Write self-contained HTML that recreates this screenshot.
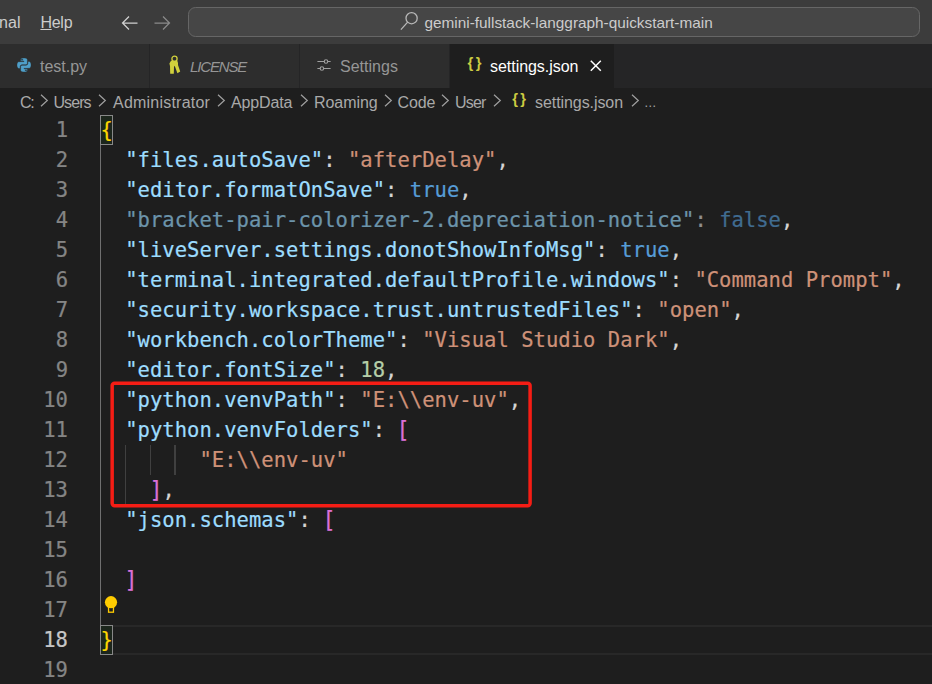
<!DOCTYPE html>
<html><head><meta charset="utf-8">
<style>
html,body{margin:0;padding:0;}
body{width:932px;height:684px;overflow:hidden;background:#1e1e1e;position:relative;font-family:"Liberation Sans","DejaVu Sans",sans-serif;color:#ccc;}
.abs{position:absolute;}
#title{left:0;top:0;width:932px;height:44px;background:#3c3c3c;}
#title .t{position:absolute;top:0;height:44px;line-height:45px;font-size:16px;color:#cccccc;white-space:pre;}
#cc{position:absolute;left:188px;top:7px;width:732px;height:30px;border:1px solid #666666;border-radius:7.5px;background:#464646;box-sizing:border-box;}
#tabs{left:0;top:44px;width:932px;height:44px;background:#252526;}
.tab{position:absolute;top:0;height:44px;background:#2d2d2d;border-right:1px solid #252526;box-sizing:border-box;}
.tab .l{position:absolute;top:0;height:44px;line-height:45px;font-size:16px;color:#969696;white-space:pre;}
.tab.act{background:#1e1e1e;}
.tab.act .l{color:#ffffff;}
#bc{left:0;top:88px;width:932px;height:27px;background:#1e1e1e;}
#bc .b{position:absolute;top:1px;height:27px;line-height:28px;font-size:16px;color:#a9a9a9;white-space:pre;}
#ed{left:0;top:115px;width:932px;height:570px;font-family:"DejaVu Sans Mono","Liberation Mono",monospace;font-size:20.5px;letter-spacing:.03px;-webkit-text-stroke:.22px;}
.ln{position:absolute;left:0;width:68px;text-align:right;height:30px;line-height:30px;color:#858585;white-space:pre;}
.cl{position:absolute;left:100.5px;height:30px;line-height:30px;white-space:pre;color:#d4d4d4;}
.k{color:#9cdcfe}.s{color:#ce9178}.b{color:#569cd6}.n{color:#b5cea8}.p{color:#d4d4d4}.y{color:#ffd700}.m{color:#da70d6;display:inline-block;transform:scale(1.06,1.09);transform-origin:60% 6px}
.dim{opacity:.62}
.br{position:absolute;font-family:"Liberation Sans",sans-serif;font-weight:bold;font-size:14.800px;letter-spacing:2.300px;color:#cbcb41;white-space:pre;}
.g{position:absolute;width:1.25px;background:#404040;}
.ga{background:#707070;}
.ln.cur{color:#c6c6c6;}
.bmb{position:absolute;left:100px;width:13px;height:30px;box-sizing:border-box;border:1px solid #888888;background:#1c261c;}
.curline{position:absolute;left:101px;top:510px;width:831px;height:30px;box-sizing:border-box;border-top:2px solid #282828;border-bottom:2px solid #282828;}
</style></head><body>
<div id="title" class="abs">
 <span class="t" style="left:-40px">Terminal</span>
 <span class="t" style="left:40.4px;letter-spacing:-.25px"><u>H</u>elp</span>
 <svg class="abs" style="left:120px;top:12.5px" width="20" height="20" viewBox="0 0 20 20"><path d="M17.5 10H2.5M9 3.5L2.5 10L9 16.5" fill="none" stroke="#d0d0d0" stroke-width="1.250"/></svg>
 <svg class="abs" style="left:152px;top:12.5px" width="20" height="20" viewBox="0 0 20 20"><path d="M2.5 10H17.5M11 3.5L17.5 10L11 16.5" fill="none" stroke="#8a8a8a" stroke-width="1.250"/></svg>
 <div id="cc"></div>
 <svg class="abs" style="left:399px;top:11px" width="20" height="20" viewBox="0 0 20 20"><circle cx="12.600" cy="7.200" r="5.600" fill="none" stroke="#b8b8b8" stroke-width="1.300"/><path d="M8.640 11.160L1.900 18.600" stroke="#b8b8b8" stroke-width="1.300"/></svg>
 <span class="t" style="left:424.5px;font-size:15.35px">gemini-fullstack-langgraph-quickstart-main</span>
</div>
<div id="tabs" class="abs">
 <div class="tab" style="left:0;width:150px"><svg class="abs" style="left:17.4px;top:13.8px" width="14" height="14" viewBox="0 0 24 24"><path fill="#4f9fc9" stroke="#2d2d2d" stroke-width=".7" d="M14.25.18l.9.2.73.26.59.3.45.32.34.34.25.34.16.33.1.3.04.26.02.2-.01.13V8.5l-.05.63-.13.55-.21.46-.26.38-.3.31-.33.25-.35.19-.35.14-.33.1-.3.07-.26.04-.21.02H8.77l-.69.05-.59.14-.5.22-.41.27-.33.32-.27.35-.2.36-.15.37-.1.35-.07.32-.04.27-.02.21v3.06H3.17l-.21-.03-.28-.07-.32-.12-.35-.18-.36-.26-.36-.36-.35-.46-.32-.59-.28-.73-.21-.88-.14-1.05-.05-1.23.06-1.22.16-1.04.24-.87.32-.71.36-.57.4-.44.42-.33.42-.24.4-.16.36-.1.32-.05.24-.01h.16l.06.01h8.16v-.83H6.18l-.01-2.75-.02-.37.05-.34.11-.31.17-.28.25-.26.31-.23.38-.2.44-.18.51-.15.58-.12.64-.1.71-.06.77-.04.84-.02 1.27.05zm-6.3 1.98l-.23.33-.08.41.08.41.23.34.33.22.41.09.41-.09.33-.22.23-.34.08-.41-.08-.41-.23-.33-.33-.22-.41-.09-.41.09zm13.09 3.95l.28.06.32.12.35.18.36.27.36.35.35.47.32.59.28.73.21.88.14 1.04.05 1.23-.06 1.23-.16 1.04-.24.86-.32.71-.36.57-.4.45-.42.33-.42.24-.4.16-.36.09-.32.05-.24.02-.16-.01h-8.22v.82h5.84l.01 2.76.02.36-.05.34-.11.31-.17.29-.25.25-.31.24-.38.2-.44.17-.51.15-.58.13-.64.09-.71.07-.77.04-.84.01-1.27-.04-1.07-.14-.9-.2-.73-.25-.59-.3-.45-.33-.34-.34-.25-.34-.16-.33-.1-.3-.04-.25-.02-.2.01-.13v-5.34l.05-.64.13-.54.21-.46.26-.38.3-.32.33-.24.35-.2.35-.14.33-.1.3-.06.26-.04.21-.02.13-.01h5.84l.69-.05.59-.14.5-.21.41-.28.33-.32.27-.35.2-.36.15-.36.1-.35.07-.32.04-.28.02-.21V6.07h2.09l.14.01zm-6.47 14.25l-.23.33-.08.41.08.41.23.33.33.23.41.08.41-.08.33-.23.23-.33.08-.41-.08-.41-.23-.33-.33-.23-.41-.08-.41.08z"/></svg><span class="l" style="left:40px;letter-spacing:-.02px">test.py</span></div>
 <div class="tab" style="left:150px;width:150px"><svg class="abs" style="left:17px;top:10px" width="16" height="22" viewBox="0 0 16 22"><circle cx="7.500" cy="4.700" r="2.600" fill="none" stroke="#d0d03c" stroke-width="1.300"/><path d="M4 6.800L10.300 6.800L11 9L11 11L13.200 17.500L10.400 19.200L7.700 11.800L7 13L6.800 19.800L3.200 19.800L3 12L2.400 9.500Z" fill="#d0d03c"/></svg><span class="l" style="left:40px;font-style:italic;font-size:15px;letter-spacing:-1.15px">LICENSE</span></div>
 <div class="tab" style="left:300px;width:150px"><svg class="abs" style="left:16px;top:12px" width="18" height="20" viewBox="0 0 18 20"><g fill="none" stroke="#a0a0a0" stroke-width="1.150"><path d="M1.400 5.500H8.300M11.700 5.500H14.600"/><circle cx="10" cy="5.500" r="1.750"/><path d="M1.400 12.500H4.200M7.600 12.500H14.600"/><circle cx="5.900" cy="12.500" r="1.750"/></g></svg><span class="l" style="left:40px;letter-spacing:.02px">Settings</span></div>
 <div class="tab act" style="left:450px;width:165px"><span class="br" style="left:17.600px;top:0;line-height:39px">{}</span><span class="l" style="left:40px;letter-spacing:-.04px">settings.json</span><svg class="abs" style="left:140.400px;top:16.400px" width="11.600" height="11.600" viewBox="0 0 13 13"><path d="M.9.900L12.100 12.100M12.100.900L.900 12.100" stroke="#ffffff" stroke-width="1.700" fill="none"/></svg></div>
</div>
<div id="bc" class="abs">
 <span class="b" style="left:20px;letter-spacing:-1.3px">C:</span>
 <span class="b" style="left:53.5px;letter-spacing:-0.94px">Users</span>
 <span class="b" style="left:113px;letter-spacing:0.22px">Administrator</span>
 <span class="b" style="left:231px;letter-spacing:-0.14px">AppData</span>
 <span class="b" style="left:314px;letter-spacing:-0.06px">Roaming</span>
 <span class="b" style="left:397.5px;letter-spacing:-0.09px">Code</span>
 <span class="b" style="left:455px;letter-spacing:-0.78px">User</span>
 <span class="b" style="left:535px;letter-spacing:-0.07px">settings.json</span>
 <span class="b" style="left:644px;font-size:12.5px">…</span>
 <svg class="abs" style="left:39.5px;top:6.400px" width="9" height="13" viewBox="0 0 9 13"><path d="M1 .8L7.300 6.500L1 12.200" fill="none" stroke="#a0a0a0" stroke-width="1.200"/></svg>
 <svg class="abs" style="left:98.0px;top:6.400px" width="9" height="13" viewBox="0 0 9 13"><path d="M1 .8L7.300 6.500L1 12.200" fill="none" stroke="#a0a0a0" stroke-width="1.200"/></svg>
 <svg class="abs" style="left:217.0px;top:6.400px" width="9" height="13" viewBox="0 0 9 13"><path d="M1 .8L7.300 6.500L1 12.200" fill="none" stroke="#a0a0a0" stroke-width="1.200"/></svg>
 <svg class="abs" style="left:299.5px;top:6.400px" width="9" height="13" viewBox="0 0 9 13"><path d="M1 .8L7.300 6.500L1 12.200" fill="none" stroke="#a0a0a0" stroke-width="1.200"/></svg>
 <svg class="abs" style="left:383.5px;top:6.400px" width="9" height="13" viewBox="0 0 9 13"><path d="M1 .8L7.300 6.500L1 12.200" fill="none" stroke="#a0a0a0" stroke-width="1.200"/></svg>
 <svg class="abs" style="left:441.0px;top:6.400px" width="9" height="13" viewBox="0 0 9 13"><path d="M1 .8L7.300 6.500L1 12.200" fill="none" stroke="#a0a0a0" stroke-width="1.200"/></svg>
 <svg class="abs" style="left:493.1px;top:6.400px" width="9" height="13" viewBox="0 0 9 13"><path d="M1 .8L7.300 6.500L1 12.200" fill="none" stroke="#a0a0a0" stroke-width="1.200"/></svg>
 <svg class="abs" style="left:630.5px;top:6.400px" width="9" height="13" viewBox="0 0 9 13"><path d="M1 .8L7.300 6.500L1 12.200" fill="none" stroke="#a0a0a0" stroke-width="1.200"/></svg>
 <span class="br" style="left:512.300px;top:0;line-height:23.500px">{}</span>
</div>
<div id="ed" class="abs">
<div class="curline"></div>
<div class="bmb" style="top:0"></div><div class="bmb" style="top:510px"></div>
<div class="ln" style="top:0px">1</div><div class="cl" style="top:0px"><span class="y">{</span></div>
<div class="ln" style="top:30px">2</div><div class="cl" style="top:30px">  <span class="k">"files.autoSave"</span>: <span class="s">"afterDelay"</span>,</div>
<div class="ln" style="top:60px">3</div><div class="cl" style="top:60px">  <span class="k">"editor.formatOnSave"</span>: <span class="b">true</span>,</div>
<div class="ln" style="top:90px">4</div><div class="cl" style="top:90px">  <span class="dim"><span class="k">"bracket-pair-colorizer-2.depreciation-notice"</span>: <span class="b">false</span></span>,</div>
<div class="ln" style="top:120px">5</div><div class="cl" style="top:120px">  <span class="k">"liveServer.settings.donotShowInfoMsg"</span>: <span class="b">true</span>,</div>
<div class="ln" style="top:150px">6</div><div class="cl" style="top:150px">  <span class="k">"terminal.integrated.defaultProfile.windows"</span>: <span class="s">"Command Prompt"</span>,</div>
<div class="ln" style="top:180px">7</div><div class="cl" style="top:180px">  <span class="k">"security.workspace.trust.untrustedFiles"</span>: <span class="s">"open"</span>,</div>
<div class="ln" style="top:210px">8</div><div class="cl" style="top:210px">  <span class="k">"workbench.colorTheme"</span>: <span class="s">"Visual Studio Dark"</span>,</div>
<div class="ln" style="top:240px">9</div><div class="cl" style="top:240px">  <span class="k">"editor.fontSize"</span>: <span class="n">18</span>,</div>
<div class="ln" style="top:270px">10</div><div class="cl" style="top:270px">  <span class="k">"python.venvPath"</span>: <span class="s">"E:\\env-uv"</span>,</div>
<div class="ln" style="top:300px">11</div><div class="cl" style="top:300px">  <span class="k">"python.venvFolders"</span>: <span class="m">[</span></div>
<div class="ln" style="top:330px">12</div><div class="cl" style="top:330px">        <span class="s">"E:\\env-uv"</span></div>
<div class="ln" style="top:360px">13</div><div class="cl" style="top:360px">    <span class="m">]</span>,</div>
<div class="ln" style="top:390px">14</div><div class="cl" style="top:390px">  <span class="k">"json.schemas"</span>: <span class="m">[</span></div>
<div class="ln" style="top:420px">15</div><div class="cl" style="top:420px"></div>
<div class="ln" style="top:450px">16</div><div class="cl" style="top:450px">  <span class="m">]</span></div>
<div class="ln" style="top:480px">17</div><div class="cl" style="top:480px"></div>
<div class="ln cur" style="top:510px">18</div><div class="cl" style="top:510px"><span class="y">}</span></div>
<div class="ln" style="top:540px">19</div><div class="cl" style="top:540px"></div>
<div class="g ga" style="left:100px;top:30px;height:480px"></div>
<div class="g" style="left:124.900px;top:330px;height:60px"></div>
<div class="g" style="left:149.600px;top:330px;height:30px"></div>
<div class="g" style="left:174.400px;top:330px;height:30px"></div>
<svg class="abs" style="left:0;top:0" width="932" height="569" viewBox="0 0 932 569"><rect x="112.150" y="268.250" width="417.950" height="122.500" rx="2.400" fill="none" stroke="#f51d15" stroke-width="3.500"/></svg>
<svg class="abs" style="left:102px;top:480px" width="18" height="20" viewBox="0 0 18 20"><circle cx="9" cy="7.200" r="6.100" fill="#ffcc00"/><path d="M4.900 11.200L13.100 11.200L12.100 12.800L5.900 12.800Z" fill="#ffcc00"/><rect x="6.550" y="12.200" width="4.900" height="5" fill="none" stroke="#ffcc00" stroke-width="1.300"/></svg>
</div>
</body></html>
